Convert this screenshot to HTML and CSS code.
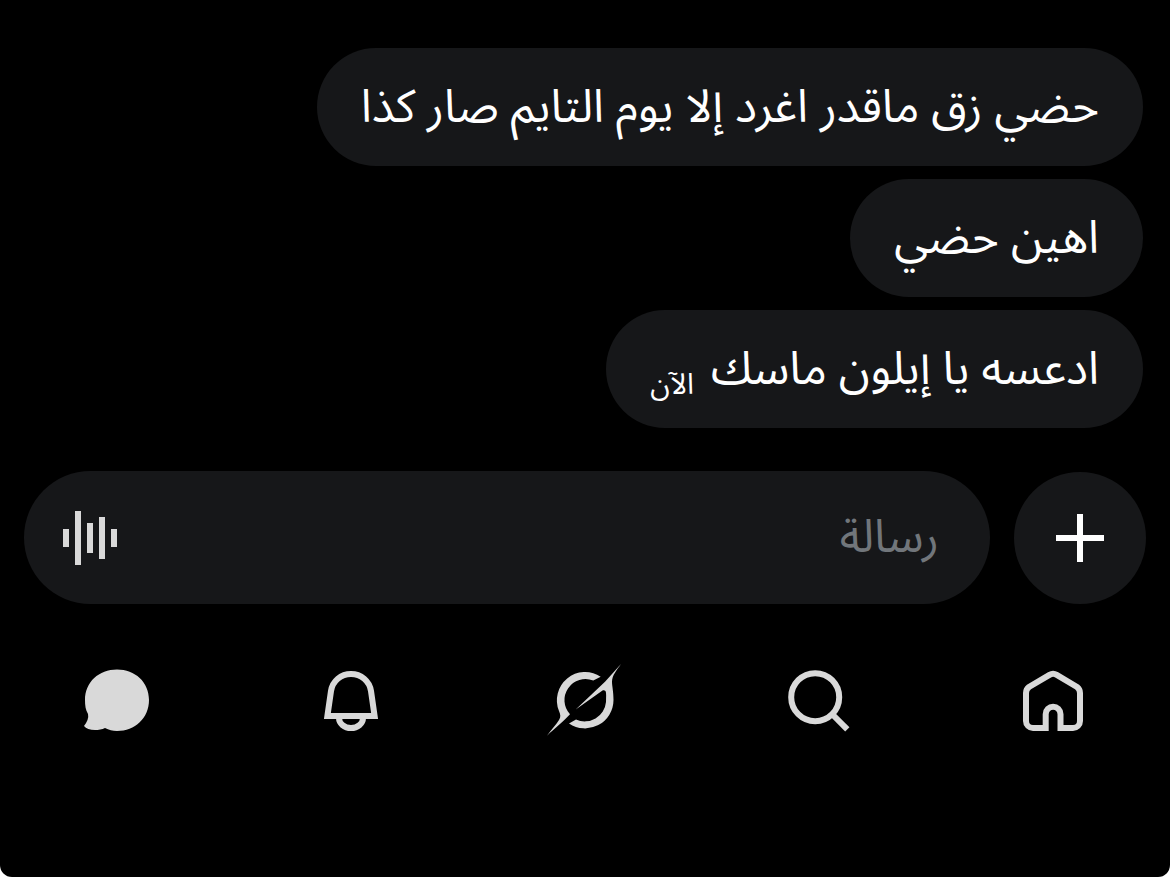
FILE: index.html
```html
<!DOCTYPE html>
<html lang="ar" dir="rtl">

<head>
  <meta charset="UTF-8">
  <meta name="viewport" content="width=device-width, initial-scale=1.0">
  <title>الرسائل</title>

  <link rel="stylesheet" href="styles.css">
</head>

<body>

  <main class="chat">
    <section class="messages">
      <p class="bubble">حضي زق ماقدر اغرد إلا يوم التايم صار كذا</p>
      <p class="bubble">اهين حضي</p>
      <p class="bubble">ادعسه يا إيلون ماسك <time class="time">الآن</time></p>
    </section>

    <form class="composer">
      <button type="button" class="add" aria-label="إضافة">
        <svg class="icon" viewBox="0 0 72 72"><path d="M12 36H60M36 12V60" stroke="currentColor" stroke-width="6"/></svg>
      </button>
      <div class="field">
        <input type="text" class="text" placeholder="رسالة" aria-label="رسالة">
        <button type="button" class="voice" aria-label="رسالة صوتية">
          <svg class="icon" viewBox="0 0 72 72"><path d="M12 27V45M24 9V63M36 21V51M48 15V57M60 27V45" stroke="currentColor" stroke-width="6"/></svg>
        </button>
      </div>
    </form>
  </main>

  <nav class="tabs">
    <a href="#home" aria-label="الرئيسية">
      <svg class="icon" viewBox="0 0 72 72" fill="none" stroke="currentColor" stroke-width="6">
        <path d="M28.7 64H16a7 7 0 0 1-7-7V29c0-2.5 1-4.5 3-6L32.5 10.8c2.2-1.3 5-1.3 7.2 0L60 23c2 1.5 3 3.5 3 6V57a7 7 0 0 1-7 7H43.5V50.2a7.4 7.4 0 0 0-14.8 0z"/>
      </svg>
    </a>
    <a href="#search" aria-label="بحث">
      <svg class="icon" viewBox="0 0 72 72" fill="none" stroke="currentColor" stroke-width="6">
        <circle cx="32.2" cy="33.2" r="24"/>
        <path d="M48.5 49.5L64.3 65.3"/>
      </svg>
    </a>
    <a href="#grok" aria-label="Grok">
      <svg class="icon" viewBox="0 0 72 72" fill="currentColor">
        <path d="M51.7 12.8A28.2 28.2 0 0 0 10 47C11.5 50.5 12 53 10 56C7 61 2 66-2 71.7C5 65 15 57 21 50.3A21 21 0 0 1 44.3 16.6z"/>
        <path d="M72 0C68 6 63 11 63 18C63 22 64.5 27 64.5 36A28.5 28.5 0 0 1 20 59.5L27 55.5A21.3 21.3 0 0 0 57 38C57 33 57.5 29 56.5 27C55.5 26 54.5 26 53.5 26.5L26.7 45.5L56 17.7z"/>
      </svg>
    </a>
    <a href="#notifications" aria-label="الإشعارات">
      <svg class="icon" viewBox="0 0 72 72" fill="none" stroke="currentColor" stroke-width="6">
        <path d="M12.4 52L16 27C17.5 17 26 10 36 10S54.5 17 56 27L59.6 52z"/>
        <path d="M24 54a12 10 0 0 0 24 0"/>
      </svg>
    </a>
    <a href="#messages" aria-label="الرسائل">
      <svg class="icon" viewBox="0 0 72 72" fill="currentColor">
        <path d="M36 5.5C54 5.5 68 18 68 36S54 67 36 67c-4.5 0-8-1-12-3-3 1.5-6.5 2-10 2-5 0-9-1.5-11-4 3-4 5-8 4-12C4.5 46 4 41 4 36 4 18 18 5.5 36 5.5z"/>
      </svg>
    </a>
  </nav>

</body>

</html>
```
FILE: styles.css
```css
* {
  box-sizing: border-box;
}

html {
  background: #fff;
}

body {
  margin: 0;
  min-height: 100vh;
  background: #000;
  border-radius: 0 0 12px 12px;
  color: #fff;
  font-family: "Noto Sans Arabic", "Noto Sans", "DejaVu Sans", sans-serif;
  font-size: 46px;
}

button {
  padding: 0;
  border: 0;
  background: none;
  cursor: pointer;
}

.icon {
  display: block;
  width: 72px;
  height: 72px;
  overflow: visible;
}

.chat {
  padding: 48px 24px 0;
}

.messages {
  display: flex;
  flex-direction: column;
  align-items: flex-start;
  gap: 13px;
  padding: 0 3px;
}

.bubble {
  margin: 0;
  padding: 30px 44px 28px;
  border-radius: 59px;
  background: #161719;
  line-height: 60px;
}

.time {
  position: relative;
  top: 10px;
  margin-right: 5px;
  font-size: 29px;
  line-height: 1;
}

.composer {
  display: flex;
  align-items: center;
  gap: 24px;
  margin-top: 43px;
}

.add {
  display: flex;
  flex: none;
  align-items: center;
  justify-content: center;
  width: 132px;
  height: 132px;
  border-radius: 50%;
  background: #161719;
  color: #fff;
}

.field {
  display: flex;
  flex: 1;
  align-items: center;
  min-width: 0;
  height: 133px;
  padding: 0 51px 0 30px;
  border-radius: 67px;
  background: #161719;
}

.text {
  flex: 1;
  min-width: 0;
  padding: 0;
  border: 0;
  outline: 0;
  background: none;
  color: #fff;
  font: inherit;
}

.text::placeholder {
  color: #71767b;
  opacity: 1;
}

.voice {
  color: #d9d9d9;
}

.tabs {
  display: grid;
  grid-template-columns: repeat(5, 1fr);
  justify-items: center;
  margin-top: 60px;
  padding-bottom: 60px;
}

.tabs a {
  color: #d9d9d9;
}
```
